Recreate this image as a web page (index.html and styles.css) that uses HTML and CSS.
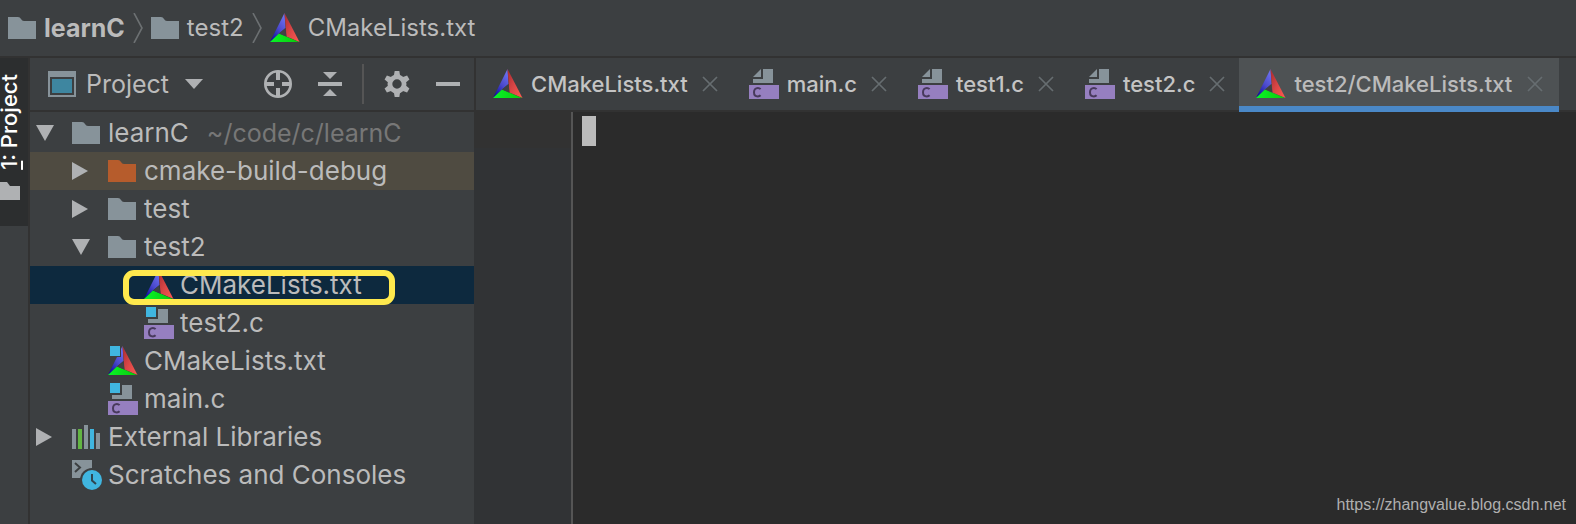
FILE: index.html
```
<!DOCTYPE html>
<html lang="en">
<head>
<meta charset="utf-8">
<title>learnC – test2/CMakeLists.txt</title>
<link rel="stylesheet" href="styles.css">
</head>
<body>
<svg class="defs" aria-hidden="true">
  <defs>
    <linearGradient id="blue" x1="0.8" y1="0" x2="0.2" y2="1">
      <stop offset="0" stop-color="#6f74f2"/><stop offset="0.5" stop-color="#4b49cc"/><stop offset="1" stop-color="#0a06a0"/>
    </linearGradient>
    <linearGradient id="red" x1="0" y1="0" x2="1" y2="1">
      <stop offset="0" stop-color="#a82a30"/><stop offset="0.5" stop-color="#d84646"/><stop offset="1" stop-color="#ff5a50"/>
    </linearGradient>
    <linearGradient id="green" x1="0" y1="0" x2="1" y2="0">
      <stop offset="0" stop-color="#08f628"/><stop offset="1" stop-color="#0cc80c"/>
    </linearGradient>
  </defs>
  <symbol id="folder" viewBox="0 0 28 22"><path d="M0 0H10Q12 0 13 2Q14 4 16 4H28V22H0Z" fill="currentColor"/></symbol>
  <symbol id="cmake" viewBox="0 0 30 30">
    <path d="M14.5 0L15.5 15L9 20.5L0 29Z" fill="url(#blue)"/>
    <path d="M14.5 0L29.5 29L16.5 23.5Z" fill="url(#red)"/>
    <path d="M9 20.5L29 29H0Z" fill="url(#green)"/>
    <path d="M15.5 15L16.3 23.5L9 20.5Z" fill="#3f4144"/>
  </symbol>
  <symbol id="cfile" viewBox="0 0 30 30">
    <path d="M4 8L12 0V8ZM14 0H24V14H4V10H14Z" fill="#87939a"/>
    <path d="M0 16H30V30H0Z" fill="#967fc0"/>
    <path d="M11.6 20.2C10.8 19.3 9.9 19 8.9 19C6.4 19 5 20.8 5 23.2C5 25.7 6.4 27.4 8.9 27.4C9.9 27.4 10.8 27.1 11.6 26.3" fill="none" stroke="#483a5c" stroke-width="2"/>
  </symbol>
  <symbol id="cfile-src" viewBox="0 0 30 32">
    <path d="M2 0H12V10H2Z" fill="#40b6e0"/>
    <path d="M14 2H24V16H4V12H14Z" fill="#87939a"/>
    <path d="M0 18H30V32H0Z" fill="#967fc0"/>
    <path d="M11.6 22.2C10.8 21.3 9.9 21 8.9 21C6.4 21 5 22.8 5 25.2C5 27.7 6.4 29.4 8.9 29.4C9.9 29.4 10.8 29.1 11.6 28.3" fill="none" stroke="#483a5c" stroke-width="2"/>
  </symbol>
  <symbol id="down" viewBox="0 0 18 16"><path d="M0 0H18L9 16Z" fill="#afb1b3"/></symbol>
  <symbol id="right" viewBox="0 0 16 18"><path d="M0 0L16 9L0 18Z" fill="#afb1b3"/></symbol>
  <symbol id="close" viewBox="0 0 16 16"><path d="M1 1L15 15M15 1L1 15" stroke="#666d70" stroke-width="1.7"/></symbol>
  <symbol id="chevron" viewBox="0 0 10 30"><path d="M1 0L9 15L1 30" fill="none" stroke="#6c7072" stroke-width="1.6"/></symbol>
</svg>

<nav class="crumbs" aria-label="Breadcrumb">
  <a class="crumb crumb-root" href="#"><svg class="folder"><use href="#folder"/></svg>learnC</a>
  <svg class="chevron"><use href="#chevron"/></svg>
  <a class="crumb" href="#"><svg class="folder"><use href="#folder"/></svg>test2</a>
  <svg class="chevron"><use href="#chevron"/></svg>
  <a class="crumb" href="#"><svg class="icon"><use href="#cmake"/></svg>CMakeLists.txt</a>
</nav>

<div class="workspace">
  <aside class="stripe">
    <button class="stripe-button" type="button">
      <span class="stripe-label"><u>1</u>: Project</span>
      <svg class="stripe-icon" viewBox="0 0 20 18"><path d="M0 0H7L10 4H20V18H0Z" fill="#afb1b3"/></svg>
    </button>
  </aside>

  <section class="panel">
    <header class="panel-head">
      <button class="view-picker" type="button">
        <svg class="window-icon" viewBox="0 0 28 26"><path d="M0 0H28V26H0ZM2 6V24H26V6Z" fill="#87939a" fill-rule="evenodd"/><path d="M4 8H24V22H4Z" fill="#3e86a0"/></svg>
        <span>Project</span>
        <svg class="picker-arrow" viewBox="0 0 18 10"><path d="M0 0H18L9 10Z" fill="#afb1b3"/></svg>
      </button>
      <div class="tools">
        <button type="button" aria-label="Locate file"><svg class="locate" viewBox="0 0 28 28"><circle cx="14" cy="14" r="12.7" fill="none" stroke="#afb1b3" stroke-width="2.6"/><path d="M14 1V10M14 18V27M1 14H10M18 14H27" stroke="#afb1b3" stroke-width="4"/></svg></button>
        <button type="button" aria-label="Collapse all"><svg class="collapse" viewBox="0 0 24 24"><path d="M5 0H19L12 7ZM5 24H19L12 17ZM0 10H24V14H0Z" fill="#afb1b3"/></svg></button>
        <span class="divider"></span>
        <button type="button" aria-label="Settings"><svg class="gear" viewBox="0 0 26 26"><g fill="#afb1b3"><path fill-rule="evenodd" d="M13 3.5A9.5 9.5 0 1 0 13 22.5A9.5 9.5 0 1 0 13 3.5ZM13 8.3A4.7 4.7 0 1 1 13 17.7A4.7 4.7 0 1 1 13 8.3Z"/><path id="tooth" d="M10.7 0H15.3L16.2 5H9.8Z"/><use href="#tooth" transform="rotate(60 13 13)"/><use href="#tooth" transform="rotate(120 13 13)"/><use href="#tooth" transform="rotate(180 13 13)"/><use href="#tooth" transform="rotate(240 13 13)"/><use href="#tooth" transform="rotate(300 13 13)"/></g></svg></button>
        <button type="button" aria-label="Hide"><svg class="minus" viewBox="0 0 24 4"><path d="M0 0H24V4H0Z" fill="#afb1b3"/></svg></button>
      </div>
    </header>

    <ul class="tree">
      <li class="row"><span class="toggle"><svg class="down"><use href="#down"/></svg></span><span class="glyph"><svg class="folder"><use href="#folder"/></svg></span>learnC<span class="path">~/code/c/learnC</span></li>
      <li class="row level-1 excluded"><span class="toggle"><svg class="right"><use href="#right"/></svg></span><span class="glyph"><svg class="folder orange"><use href="#folder"/></svg></span>cmake-build-debug</li>
      <li class="row level-1"><span class="toggle"><svg class="right"><use href="#right"/></svg></span><span class="glyph"><svg class="folder"><use href="#folder"/></svg></span>test</li>
      <li class="row level-1"><span class="toggle"><svg class="down"><use href="#down"/></svg></span><span class="glyph"><svg class="folder"><use href="#folder"/></svg></span>test2</li>
      <li class="row level-2 selected"><span class="toggle"></span><span class="glyph"><svg class="icon"><use href="#cmake"/></svg></span>CMakeLists.txt<span class="marker"></span></li>
      <li class="row level-2"><span class="toggle"></span><span class="glyph"><svg class="source"><use href="#cfile-src"/></svg></span>test2.c</li>
      <li class="row level-1"><span class="toggle"></span><span class="glyph"><svg class="icon" viewBox="0 0 30 30"><use href="#cmake"/><path d="M1 0H13V11H1Z" fill="#3c3f41"/><path d="M2 0H12V10H2Z" fill="#40b6e0"/></svg></span>CMakeLists.txt</li>
      <li class="row level-1"><span class="toggle"></span><span class="glyph"><svg class="source"><use href="#cfile-src"/></svg></span>main.c</li>
      <li class="row"><span class="toggle"><svg class="right"><use href="#right"/></svg></span><span class="glyph"><svg class="library" viewBox="0 0 28 24"><path d="M0 4H4V24H0ZM12 0H16V24H12ZM24 8H28V24H24Z" fill="#87939a"/><path d="M6 4H10V24H6Z" fill="#62b543"/><path d="M18 4H22V24H18Z" fill="#40b6e0"/></svg></span>External Libraries</li>
      <li class="row"><span class="toggle"></span><span class="glyph"><svg class="icon" viewBox="0 0 30 30"><path d="M0 0H20V18H0Z" fill="#87939a"/><path d="M3 3L8 7.5L3 12" fill="none" stroke="#3c3f41" stroke-width="2"/><circle cx="20" cy="20" r="12" fill="#3c3f41"/><circle cx="20" cy="20" r="10" fill="#40b6e0"/><path d="M20 14V20.5L24 24" fill="none" stroke="#2f4650" stroke-width="2"/></svg></span>Scratches and Consoles</li>
    </ul>
  </section>

  <main class="editor">
    <div class="tabs">
      <div class="tab"><svg class="icon"><use href="#cmake"/></svg><span class="tab-name">CMakeLists.txt</span><button type="button" aria-label="Close CMakeLists.txt"><svg class="close"><use href="#close"/></svg></button></div>
      <div class="tab"><svg class="icon"><use href="#cfile"/></svg><span class="tab-name">main.c</span><button type="button" aria-label="Close main.c"><svg class="close"><use href="#close"/></svg></button></div>
      <div class="tab"><svg class="icon"><use href="#cfile"/></svg><span class="tab-name">test1.c</span><button type="button" aria-label="Close test1.c"><svg class="close"><use href="#close"/></svg></button></div>
      <div class="tab"><svg class="icon"><use href="#cfile"/></svg><span class="tab-name">test2.c</span><button type="button" aria-label="Close test2.c"><svg class="close"><use href="#close"/></svg></button></div>
      <div class="tab active"><svg class="icon"><use href="#cmake"/></svg><span class="tab-name">test2/CMakeLists.txt</span><button type="button" aria-label="Close test2/CMakeLists.txt"><svg class="close"><use href="#close"/></svg></button></div>
    </div>
    <div class="code">
      <div class="gutter"></div>
      <div class="text"><span class="caret"></span></div>
      <span class="watermark">https://zhangvalue.blog.csdn.net</span>
    </div>
  </main>
</div>
</body>
</html>
```
FILE: styles.css
```
* { box-sizing: border-box; }

body {
  margin: 0;
  min-height: 100vh;
  display: flex;
  flex-direction: column;
  background: #3c3f41;
  color: #bbbbbb;
  font-family: Inter, "Liberation Sans", sans-serif;
  font-size: 25px;
  line-height: 30px;
  white-space: nowrap;
}

button {
  display: flex;
  align-items: center;
  padding: 0;
  border: 0;
  background: none;
  color: inherit;
  font: inherit;
}

svg { display: block; flex: none; }
.defs { position: absolute; width: 0; height: 0; }
.folder { width: 28px; height: 22px; color: #87939a; }
.orange { color: #b65c2c; }
.icon { width: 30px; height: 30px; }
.source { width: 30px; height: 32px; }
.down { width: 18px; height: 16px; }
.right { width: 16px; height: 18px; }
.close { width: 16px; height: 16px; }
.chevron { width: 10px; height: 30px; }
.library { width: 28px; height: 24px; }

.crumbs {
  display: flex;
  align-items: center;
  gap: 8px;
  height: 58px;
  padding: 0 8px;
  border-bottom: 2px solid #323232;
  font-size: 24px;
}
.crumb {
  display: flex;
  align-items: center;
  gap: 8px;
  color: inherit;
  text-decoration: none;
}
.crumb-root { font-size: 25px; font-weight: 700; }

.workspace { display: flex; flex: 1; }

.stripe { width: 30px; border-right: 2px solid #323232; }
.stripe-button {
  flex-direction: column;
  justify-content: flex-end;
  align-items: flex-start;
  gap: 12px;
  width: 28px;
  height: 168px;
  padding-bottom: 26px;
  background: #2c2e2f;
  color: #ffffff;
  font-size: 22px;
  font-weight: 500;
  line-height: 18px;
}
.stripe-label { writing-mode: vertical-rl; transform: rotate(180deg); }
.stripe-icon { width: 20px; height: 18px; }

.panel { flex: none; width: 444px; }
.panel-head {
  display: flex;
  align-items: center;
  justify-content: space-between;
  height: 54px;
  padding: 0 14px 0 18px;
  border-bottom: 2px solid #323232;
}
.view-picker { gap: 10px; }
.window-icon { width: 28px; height: 26px; }
.picker-arrow { width: 18px; height: 10px; margin-left: 6px; }
.tools { display: flex; align-items: center; gap: 20px; }
.divider { width: 2px; height: 40px; background: #555555; }
.locate { width: 28px; height: 28px; margin-right: 6px; }
.collapse { width: 24px; height: 24px; }
.gear { width: 26px; height: 26px; margin-right: 6px; }
.minus { width: 24px; height: 4px; }

.tree { margin: 0; padding: 2px 0 0; list-style: none; font-size: 26px; }
.row {
  position: relative;
  display: flex;
  align-items: center;
  height: 38px;
  padding-left: 6px;
}
.level-1 { padding-left: 42px; }
.level-2 { padding-left: 78px; }
.excluded { background: #4f4b41; }
.selected { background: #0d293e; }
.toggle { width: 36px; }
.glyph { width: 36px; }
.path { margin-left: 18px; color: #777777; font-size: 25px; }
.marker {
  position: absolute;
  left: 93px;
  top: 4px;
  width: 272px;
  height: 35px;
  border: 6px solid #ffe94d;
  border-radius: 11px;
}

.editor { flex: 1; display: flex; flex-direction: column; min-width: 0; }
.tabs {
  display: flex;
  height: 54px;
  border-left: 2px solid #323232;
  font-size: 22px;
  font-weight: 500;
}
.tab {
  display: flex;
  align-items: center;
  gap: 8px;
  padding: 0 14px 0 17px;
  border-bottom: 2px solid #323232;
  color: #c4c4c4;
}
.tab-name { flex: 1; margin-right: 6px; }
.active {
  min-width: 320px;
  padding-top: 4px;
  padding-right: 16px;
  border-bottom: 6px solid #4a88c7;
  background: #4e5254;
  color: #bbbbbb;
}
.tabs::after { content: ""; flex: 1; border-bottom: 2px solid #323232; }

.code { position: relative; display: flex; flex: 1; background: #2b2b2b; }
.gutter {
  width: 99px;
  border-right: 2px solid #555555;
  background: linear-gradient(#323232 36px, #313335 36px);
}
.text { flex: 1; padding: 4px 9px; }
.caret { display: block; width: 14px; height: 30px; background: #bbbbbb; }
.watermark {
  position: absolute;
  right: 10px;
  bottom: 9px;
  color: #b0b0b0;
  font: 16px/20px "Liberation Sans", sans-serif;
}
```
